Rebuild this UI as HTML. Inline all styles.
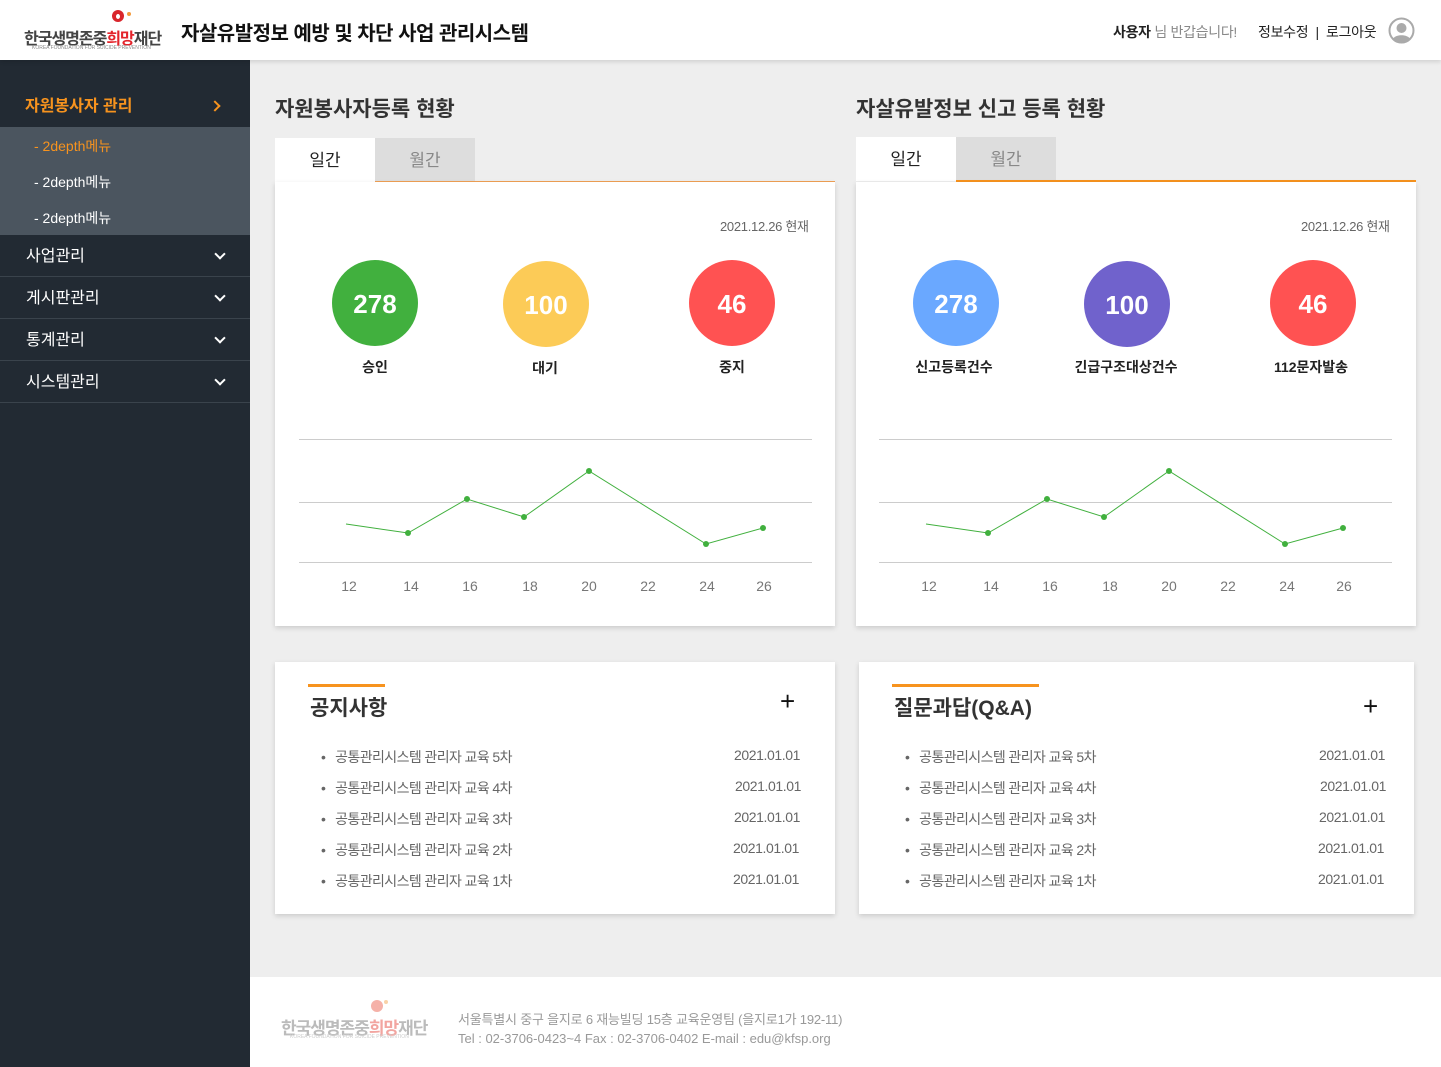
<!DOCTYPE html>
<html><head><meta charset="utf-8"><style>
*{margin:0;padding:0;box-sizing:border-box}
body{width:1441px;height:1067px;position:relative;overflow:hidden;background:#eeeeee;font-family:"Liberation Sans","Noto Sans CJK KR",sans-serif;color:#222}
.a{position:absolute;white-space:nowrap}
.hdr{left:0;top:0;width:1441px;height:60px;background:#fff;box-shadow:0 2px 4px rgba(0,0,0,.12);z-index:2}
.side{left:0;top:60px;width:250px;height:1007px;background:#222a33}
.card{background:#fff;box-shadow:0 2px 5px rgba(0,0,0,.15)}
.mi{left:0;width:250px;height:42px;border-bottom:1px solid #3a434c;color:#fff;font-size:16px;line-height:44px;padding-left:26px}
.chev{position:absolute;right:26px;top:15px;width:8px;height:8px;border-right:2px solid #fff;border-bottom:2px solid #fff;transform:rotate(45deg)}
.sub{left:34px;font-size:14px;color:#fff}
.circ{width:86px;height:86px;border-radius:50%;color:#fff;font-weight:bold;font-size:26px;text-align:center;line-height:88px}
.lbl{font-size:14px;font-weight:bold;color:#222;transform:translateX(-50%)}
.ax{font-size:14px;color:#777;transform:translateX(-50%)}
.li{font-size:14px;color:#666;letter-spacing:-0.6px}
.dt{font-size:14px;color:#666;letter-spacing:-0.4px}
</style></head><body>
<div class="a hdr">
 <div class="a" style="left:112px;top:10px;width:12px;height:12px;border-radius:50%;background:#d9262c"></div>
 <div class="a" style="left:116px;top:14px;width:4px;height:5px;border-radius:50%;background:#fff"></div>
 <div class="a" style="left:127px;top:12px;width:4px;height:4px;border-radius:50%;background:#f39a3c"></div>
 <div class="a" style="left:24px;top:25px;font-size:16px;font-weight:bold;color:#444;letter-spacing:-1px">한국생명존중<span style="color:#e3242b">희망</span>재단</div>
 <div class="a" style="left:32px;top:45px;font-size:5px;color:#888">KOREA FOUNDATION FOR SUICIDE PREVENTION</div>
 <div class="a" style="left:181px;top:17px;font-size:20px;font-weight:bold;color:#111;letter-spacing:-0.5px">자살유발정보 예방 및 차단 사업 관리시스템</div>
 <div class="a" style="left:1113px;top:22px;font-size:14px;color:#888;letter-spacing:-0.3px"><b style="color:#222">사용자</b> 님 반갑습니다!</div>
 <div class="a" style="left:1258px;top:22px;font-size:14px;color:#222;letter-spacing:-0.3px">정보수정 &nbsp;| &nbsp;로그아웃</div>
 <svg class="a" style="left:1388px;top:17px" width="27" height="27" viewBox="0 0 27 27"><circle cx="13.5" cy="13.5" r="12" fill="#fff" stroke="#aaa" stroke-width="2"/><circle cx="13.5" cy="11" r="5" fill="#aaa"/><path d="M5 22c2-5 15-5 17 0a11 11 0 0 1-17 0z" fill="#aaa"/></svg>
</div>
<div class="a side"></div>
<div class="a" style="left:0;top:85px;width:250px;height:42px;line-height:44px;padding-left:25px;color:#f7931e;font-size:16px;font-weight:bold">자원봉사자 관리</div>
<div class="a" style="left:211px;top:102px;width:8px;height:8px;border-right:2px solid #f7931e;border-top:2px solid #f7931e;transform:rotate(45deg)"></div>
<div class="a" style="left:0;top:127px;width:250px;height:108px;background:#4b555f"></div>
<div class="a sub" style="top:136px;color:#f7931e">- 2depth메뉴</div>
<div class="a sub" style="top:172px">- 2depth메뉴</div>
<div class="a sub" style="top:208px">- 2depth메뉴</div>
<div class="a mi" style="top:235px">사업관리<i class="chev"></i></div>
<div class="a mi" style="top:277px">게시판관리<i class="chev"></i></div>
<div class="a mi" style="top:319px">통계관리<i class="chev"></i></div>
<div class="a mi" style="top:361px">시스템관리<i class="chev"></i></div>

<div class="a" style="left:275px;top:93px;font-size:21px;font-weight:bold;color:#333">자원봉사자등록 현황</div>
<div class="a" style="left:275px;top:138px;width:100px;height:44px;background:#fff;text-align:center;line-height:46px;font-size:17px;color:#222">일간</div>
<div class="a" style="left:375px;top:138px;width:100px;height:44px;background:#ddd;text-align:center;line-height:46px;font-size:17px;color:#888">월간</div>
<div class="a" style="left:375px;top:181px;width:460px;height:1px;background:#f0a055"></div>
<div class="a card" style="left:275px;top:182px;width:560px;height:444px"></div>
<div class="a" style="left:720px;top:216px;font-size:13px;color:#666;letter-spacing:-0.3px">2021.12.26 현재</div>
<div class="a circ" style="left:332px;top:260px;background:#41b03e">278</div>
<div class="a circ" style="left:503px;top:261px;background:#fccb57">100</div>
<div class="a circ" style="left:689px;top:260px;background:#ff5252">46</div>
<div class="a lbl" style="left:375px;top:357px">승인</div>
<div class="a lbl" style="left:545px;top:358px">대기</div>
<div class="a lbl" style="left:732px;top:357px">중지</div>
<div class="a ax" style="left:349px;top:578px">12</div><div class="a ax" style="left:411px;top:578px">14</div><div class="a ax" style="left:470px;top:578px">16</div><div class="a ax" style="left:530px;top:578px">18</div><div class="a ax" style="left:589px;top:578px">20</div><div class="a ax" style="left:648px;top:578px">22</div><div class="a ax" style="left:707px;top:578px">24</div><div class="a ax" style="left:764px;top:578px">26</div>

<div class="a" style="left:856px;top:93px;font-size:21px;font-weight:bold;color:#333">자살유발정보 신고 등록 현황</div>
<div class="a" style="left:856px;top:137px;width:100px;height:44px;background:#fff;text-align:center;line-height:46px;font-size:17px;color:#222">일간</div>
<div class="a" style="left:956px;top:137px;width:100px;height:44px;background:#ddd;text-align:center;line-height:46px;font-size:17px;color:#888">월간</div>
<div class="a" style="left:956px;top:180px;width:460px;height:2px;background:#f7931e"></div>
<div class="a card" style="left:856px;top:182px;width:560px;height:444px"></div>
<div class="a" style="left:1301px;top:216px;font-size:13px;color:#666;letter-spacing:-0.3px">2021.12.26 현재</div>
<div class="a circ" style="left:913px;top:260px;background:#6aa8ff">278</div>
<div class="a circ" style="left:1084px;top:261px;background:#7062cc">100</div>
<div class="a circ" style="left:1270px;top:260px;background:#ff5252">46</div>
<div class="a lbl" style="left:954px;top:357px">신고등록건수</div>
<div class="a lbl" style="left:1126px;top:357px">긴급구조대상건수</div>
<div class="a lbl" style="left:1311px;top:357px">112문자발송</div>
<div class="a ax" style="left:929px;top:578px">12</div><div class="a ax" style="left:991px;top:578px">14</div><div class="a ax" style="left:1050px;top:578px">16</div><div class="a ax" style="left:1110px;top:578px">18</div><div class="a ax" style="left:1169px;top:578px">20</div><div class="a ax" style="left:1228px;top:578px">22</div><div class="a ax" style="left:1287px;top:578px">24</div><div class="a ax" style="left:1344px;top:578px">26</div>
<svg class="a" style="left:0;top:0;z-index:1" width="1441" height="1067">
<g stroke="#ccc"><path d="M299 439.5H812M299 502.5H812M299 562.5H812M879 439.5H1392M879 502.5H1392M879 562.5H1392"/></g>
<polyline fill="none" stroke="#41b03e" points="346,524 408,533 467,499 524,517 589,471 706,544 763,528"/>
<g fill="#41b03e"><circle cx="408" cy="533" r="3"/><circle cx="467" cy="499" r="3"/><circle cx="524" cy="517" r="3"/><circle cx="589" cy="471" r="3"/><circle cx="706" cy="544" r="3"/><circle cx="763" cy="528" r="3"/></g>
<polyline fill="none" stroke="#41b03e" points="926,524 988,533 1047,499 1104,517 1169,471 1285,544 1343,528"/>
<g fill="#41b03e"><circle cx="988" cy="533" r="3"/><circle cx="1047" cy="499" r="3"/><circle cx="1104" cy="517" r="3"/><circle cx="1169" cy="471" r="3"/><circle cx="1285" cy="544" r="3"/><circle cx="1343" cy="528" r="3"/></g>
</svg>

<div class="a card" style="left:275px;top:662px;width:560px;height:252px">
 <div class="a" style="left:33px;top:22px;width:77px;height:3px;background:#f7931e"></div>
 <div class="a" style="left:35px;top:30px;font-size:21px;font-weight:bold;color:#333">공지사항</div>
 <div class="a" style="left:505px;top:24px;font-size:26px;color:#111;font-weight:300">+</div>
 <div class="a li" style="left:46px;top:85px">•&nbsp;&nbsp; 공통관리시스템 관리자 교육 5차</div><div class="a dt" style="left:459px;top:85px">2021.01.01</div>
 <div class="a li" style="left:46px;top:116px">•&nbsp;&nbsp; 공통관리시스템 관리자 교육 4차</div><div class="a dt" style="left:460px;top:116px">2021.01.01</div>
 <div class="a li" style="left:46px;top:147px">•&nbsp;&nbsp; 공통관리시스템 관리자 교육 3차</div><div class="a dt" style="left:459px;top:147px">2021.01.01</div>
 <div class="a li" style="left:46px;top:178px">•&nbsp;&nbsp; 공통관리시스템 관리자 교육 2차</div><div class="a dt" style="left:458px;top:178px">2021.01.01</div>
 <div class="a li" style="left:46px;top:209px">•&nbsp;&nbsp; 공통관리시스템 관리자 교육 1차</div><div class="a dt" style="left:458px;top:209px">2021.01.01</div>
</div>
<div class="a card" style="left:859px;top:662px;width:555px;height:252px">
 <div class="a" style="left:33px;top:22px;width:147px;height:3px;background:#f7931e"></div>
 <div class="a" style="left:35px;top:30px;font-size:21px;font-weight:bold;color:#333">질문과답(Q&amp;A)</div>
 <div class="a" style="left:504px;top:29px;font-size:26px;color:#111;font-weight:300">+</div>
 <div class="a li" style="left:46px;top:85px">•&nbsp;&nbsp; 공통관리시스템 관리자 교육 5차</div><div class="a dt" style="left:460px;top:85px">2021.01.01</div>
 <div class="a li" style="left:46px;top:116px">•&nbsp;&nbsp; 공통관리시스템 관리자 교육 4차</div><div class="a dt" style="left:461px;top:116px">2021.01.01</div>
 <div class="a li" style="left:46px;top:147px">•&nbsp;&nbsp; 공통관리시스템 관리자 교육 3차</div><div class="a dt" style="left:460px;top:147px">2021.01.01</div>
 <div class="a li" style="left:46px;top:178px">•&nbsp;&nbsp; 공통관리시스템 관리자 교육 2차</div><div class="a dt" style="left:459px;top:178px">2021.01.01</div>
 <div class="a li" style="left:46px;top:209px">•&nbsp;&nbsp; 공통관리시스템 관리자 교육 1차</div><div class="a dt" style="left:459px;top:209px">2021.01.01</div>
</div>

<div class="a" style="left:250px;top:977px;width:1191px;height:90px;background:#fff">
 <div class="a" style="left:121px;top:23px;width:12px;height:12px;border-radius:50%;background:#f5b1a8"></div>
 <div class="a" style="left:134px;top:23px;width:4px;height:4px;border-radius:50%;background:#f9d2a8"></div>
 <div class="a" style="left:31px;top:37px;font-size:17px;font-weight:bold;color:#bbb;letter-spacing:-1px">한국생명존중<span style="color:#f2a5a0">희망</span>재단</div>
 <div class="a" style="left:40px;top:57px;font-size:5px;color:#ccc">KOREA FOUNDATION FOR SUICIDE PREVENTION</div>
 <div class="a" style="left:208px;top:32px;font-size:13px;color:#999;letter-spacing:-0.2px">서울특별시 중구 을지로 6 재능빌딩 15층 교육운영팀 (을지로1가 192-11)</div>
 <div class="a" style="left:208px;top:54px;font-size:13px;color:#999">Tel : 02-3706-0423~4 Fax : 02-3706-0402 E-mail : edu@kfsp.org</div>
</div>
</body></html>
